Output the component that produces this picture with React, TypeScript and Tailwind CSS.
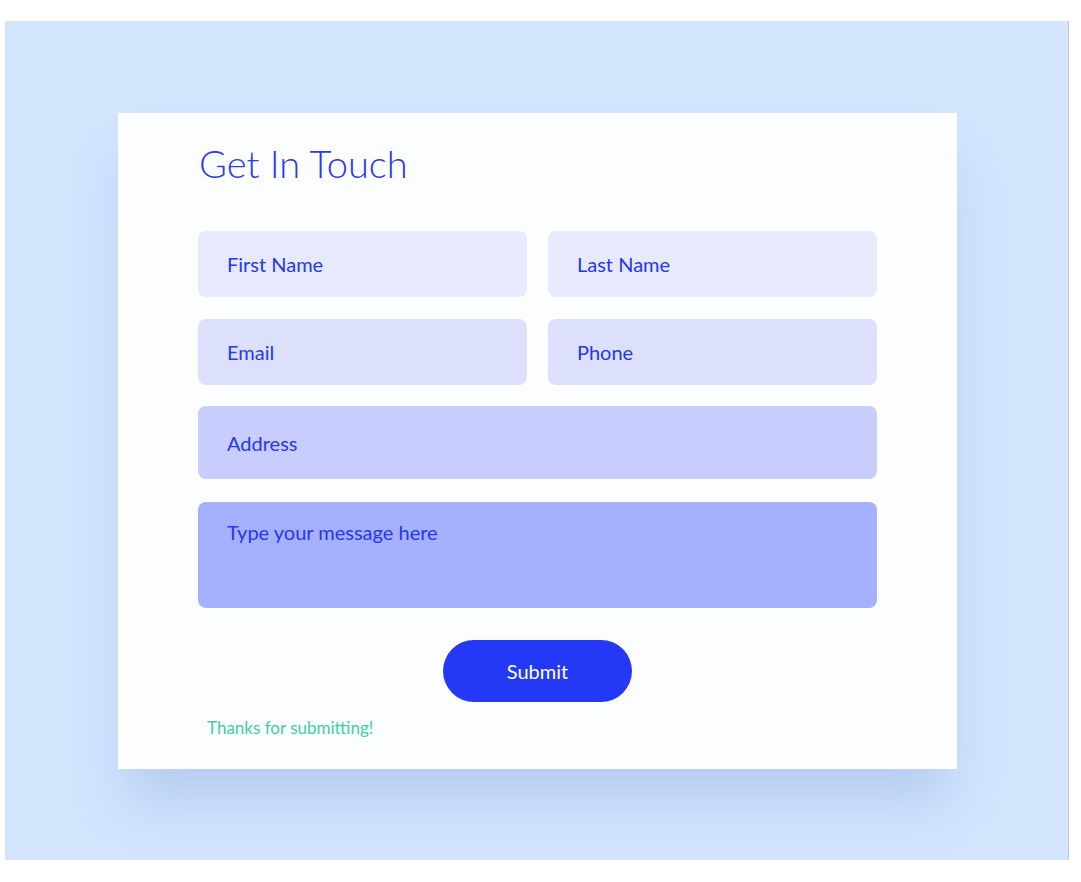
export default function App() {
  return (
    <div className="w-[1081px] h-[882px] bg-white pt-[21px] pl-[5px] font-['Lato','Open_Sans',sans-serif]">
      <div className="w-[1064px] h-[839px] bg-[#d3e4fd] border-r border-[#b9c9e0] pt-[92px] pl-[113px]">
        {/* CARD */}
        <div className="w-[839px] h-[656px] bg-[#fcfdff] shadow-[0_40px_50px_-10px_rgba(110,150,210,0.3)] px-[80px] pt-[27px]">
          <h1 className="text-[38px] leading-[46px] font-light text-[#2a3af2] pl-[1px]">
            Get In Touch
          </h1>

          <div className="mt-[45px] flex flex-col">
            <div className="grid grid-cols-2 gap-[21px]">
              <div className="h-[66px] rounded-[8px] bg-[#e7e9fd] flex items-center px-[29px] text-[20px] text-[#2537f0]">
                First Name
              </div>
              <div className="h-[66px] rounded-[8px] bg-[#e7e9fd] flex items-center px-[29px] text-[20px] text-[#2537f0]">
                Last Name
              </div>
            </div>
            <div className="grid grid-cols-2 gap-[21px] mt-[22px]">
              <div className="h-[66px] rounded-[8px] bg-[#dde0fd] flex items-center px-[29px] text-[20px] text-[#2537f0]">
                Email
              </div>
              <div className="h-[66px] rounded-[8px] bg-[#dde0fd] flex items-center px-[29px] text-[20px] text-[#2537f0]">
                Phone
              </div>
            </div>
            <div className="h-[73px] mt-[21px] rounded-[8px] bg-[#c9cdfd] flex items-center px-[29px] text-[20px] text-[#2537f0]">
              Address
            </div>
            <div className="h-[106px] mt-[23px] rounded-[8px] bg-[#a5b0fe] px-[29px] pt-[15px] text-[20px] text-[#2537f0]">
              Type your message here
            </div>
          </div>

          <div className="flex justify-center mt-[32px]">
            <button className="w-[189px] h-[62px] rounded-full bg-[#2339f5] text-white text-[20px]">
              Submit
            </button>
          </div>

          <div className="mt-[13px] pl-[9px] text-[17px] text-[#3dcf9f]">
            Thanks for submitting!
          </div>
        </div>
      </div>
    </div>
  );
}
